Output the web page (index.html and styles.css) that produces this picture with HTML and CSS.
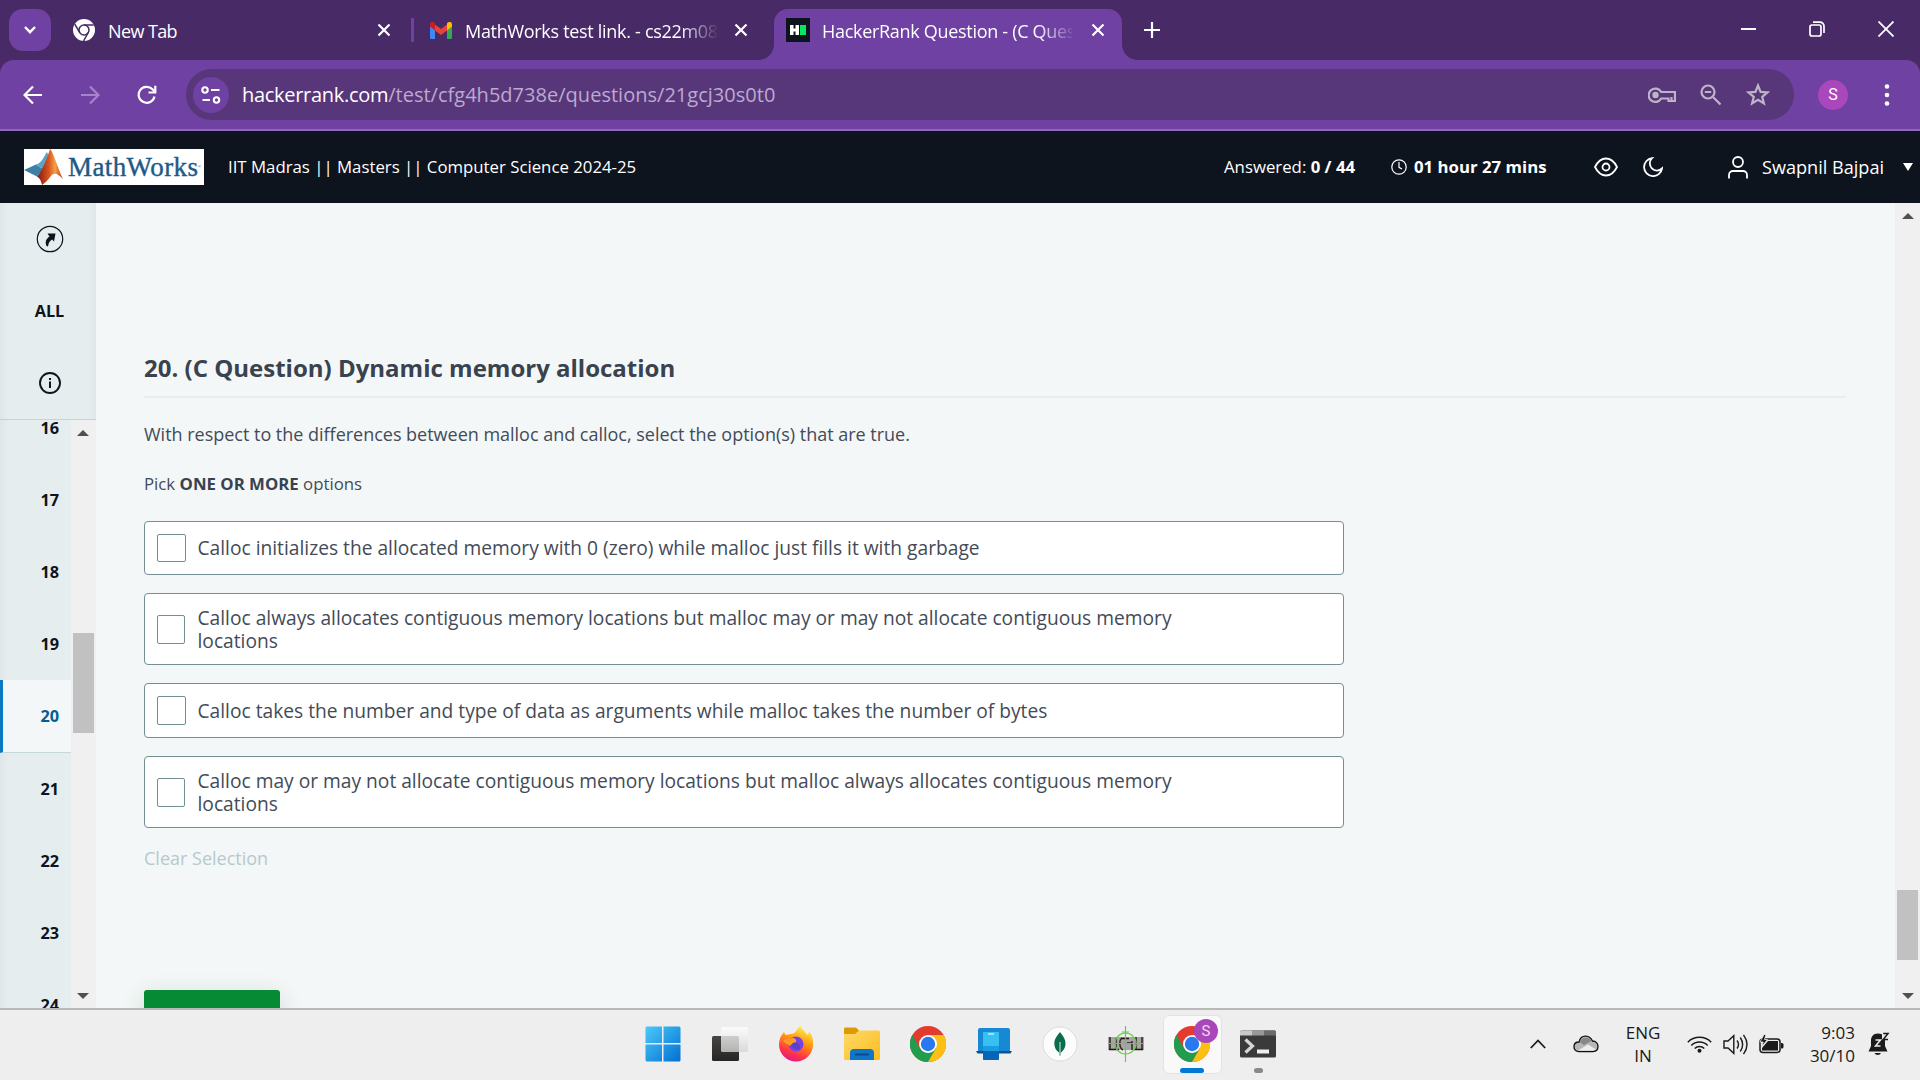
FILE: index.html
```html
<!DOCTYPE html>
<html lang="en">
<head>
<meta charset="utf-8">
<title>HackerRank Question - (C Question) Dynamic memory allocation</title>
<link rel="stylesheet" href="styles.css">
</head>
<body>
<svg class="defs" width="0" height="0" aria-hidden="true">
  <defs>
    <linearGradient id="win" x1="0" y1="0" x2="1" y2="1"><stop offset="0" stop-color="#4cc9fa"/><stop offset="1" stop-color="#0070d1"/></linearGradient>
    <linearGradient id="fox" x1=".7" y1="0" x2=".3" y2="1"><stop offset="0" stop-color="#fff44f"/><stop offset=".4" stop-color="#ff980e"/><stop offset=".75" stop-color="#ff3647"/><stop offset="1" stop-color="#e31587"/></linearGradient>
    <linearGradient id="folder" x1="0" y1="0" x2="1" y2="1"><stop offset="0" stop-color="#ffd96a"/><stop offset="1" stop-color="#fcbc1c"/></linearGradient>
    <linearGradient id="flame" x1="0" y1="0" x2="1" y2="0"><stop offset="0" stop-color="#7a1c12"/><stop offset=".45" stop-color="#d9541e"/><stop offset=".7" stop-color="#f5a04a"/><stop offset="1" stop-color="#b8321a"/></linearGradient>
    <linearGradient id="dark" x1="0" y1="0" x2="0" y2="1"><stop offset="0" stop-color="#484644"/><stop offset="1" stop-color="#262524"/></linearGradient>
    <linearGradient id="pale" x1="0" y1="0" x2="0" y2="1"><stop offset="0" stop-color="#fff"/><stop offset="1" stop-color="#d4d4d4"/></linearGradient>
    <symbol id="close" viewBox="0 0 14 14"><path d="M1.5 1.5 12.5 12.5M12.5 1.5 1.5 12.5" stroke="#fff" stroke-width="2.2" fill="none"/></symbol>
    <symbol id="chrome" viewBox="0 0 36 36">
      <circle cx="18" cy="18" r="18" fill="#e33b2e"/>
      <path d="M2.4 9 10.2 22.5 13 26 18 36A18 18 0 0 1 2.4 9Z" fill="#229c4d"/>
      <path d="M10.2 22.5 25.8 22.500 18 36Z" fill="#229c4d"/>
      <path d="M18 9H33.6A18 18 0 0 1 18 36L25.800 22.500Z" fill="#fcc013"/>
      <circle cx="18" cy="18" r="9" fill="#fff"/><circle cx="18" cy="18" r="7.2" fill="#2a78ee"/>
    </symbol>
  </defs>
</svg>

<header class="tabstrip">
  <div class="tab-search"><svg width="14" height="10" viewBox="0 0 14 10"><path d="M2 2 7 7.2 12 2" stroke="#fff" stroke-width="2.4" fill="none"/></svg></div>
  <div class="tab tab-new">
    <svg width="22" height="22" viewBox="0 0 22 22"><circle cx="11" cy="11" r="11" fill="#fff"/><g fill="none" stroke="#482a67" stroke-width="1.5"><circle cx="11" cy="11" r="5"/><path d="M11 6h9.7M6.7 13.5 1.8 5.2M15.3 13.5 10.5 22"/></g></svg>
    <span class="tab-title t-new">New Tab</span>
    <svg class="x" width="14" height="14"><use href="#close"/></svg>
  </div>
  <div class="tab-sep"></div>
  <div class="tab tab-mail">
    <svg width="22" height="17" viewBox="0 0 22 17"><path d="M0 2V15.5A1.5 1.5 0 0 0 1.5 17H5V7Z" fill="#4285f4"/><path d="M22 2V15.5A1.5 1.5 0 0 1 20.5 17H17V7Z" fill="#34a853"/><path d="M5 2.5 11 7 17 2.5V8.4L11 13 5 8.4Z" fill="#ea4335"/><path d="M0 2.2C0 0 2.6 -.8 4.2 .6L5 1.3V8.4L0 4.5Z" fill="#c5221f"/><path d="M22 2.2C22 0 19.4 -.8 17.8 .6L17 1.3V8.4L22 4.5Z" fill="#fbbc04"/></svg>
    <span class="tab-title t-mail">MathWorks test link. - cs22m088</span>
    <svg class="x" width="14" height="14"><use href="#close"/></svg>
  </div>
  <div class="tab tab-active">
    <svg width="24" height="24" viewBox="0 0 24 24"><path fill="#0d141d" d="M0 0h24v24H0z"/><path fill="#fff" d="M4 7h3.500v3.500h2V7H13v10H9.500v-3.500h-2V17H4z"/><path fill="#05e765" d="M14 7h6v10h-6z"/></svg>
    <span class="tab-title t-active">HackerRank Question - (C Question)</span>
    <svg class="x" width="14" height="14"><use href="#close"/></svg>
  </div>
  <svg class="plus" width="16" height="16" viewBox="0 0 16 16"><path d="M8 0V16M0 8H16" stroke="#fff" stroke-width="2.200"/></svg>
  <div class="win-controls">
    <svg width="15" height="16" viewBox="0 0 15 16"><path d="M0 8H15" stroke="#fff" stroke-width="2"/></svg>
    <svg width="16" height="16" viewBox="0 0 16 16" fill="none" stroke="#fff" stroke-width="1.700"><rect x="1" y="4" width="11" height="11" rx="2"/><path d="M4 1.200H11A4 4 0 0 1 15 5.200V12"/></svg>
    <svg width="16" height="16" viewBox="0 0 16 16"><path d="M.5.5 15.500 15.500M15.500.5.5 15.500" stroke="#fff" stroke-width="1.800"/></svg>
  </div>
</header>

<div class="toolbar-wrap">
<nav class="toolbar">
  <svg width="20" height="20" viewBox="0 0 20 20" fill="none" stroke="#fff" stroke-width="2.200"><path d="M19 10H2M10 1.500 1.500 10 10 18.500"/></svg>
  <svg width="20" height="20" viewBox="0 0 20 20" fill="none" stroke="#a684cb" stroke-width="2.200"><path d="M1 10H18M10 1.500 18.500 10 10 18.500"/></svg>
  <svg width="20" height="20" viewBox="0 0 20 20" fill="none" stroke="#fff" stroke-width="2.200"><path d="M17.500 11.500A8 8 0 1 1 15.500 4.300L18 7"/><path d="M18.300.8V7.500H11.500"/></svg>
  <div class="omnibox">
    <div class="site-info"><svg width="20" height="18" viewBox="0 0 20 18" fill="none" stroke="#fff" stroke-width="2.100"><circle cx="4" cy="4" r="2.700"/><path d="M10 4H18.500M1.500 14H9"/><circle cx="15.500" cy="14" r="2.700"/></svg></div>
    <div class="url"><span class="host">hackerrank.com</span><span class="path">/test/cfg4h5d738e/questions/21gcj30s0t0</span></div>
    <div class="omni-icons">
      <svg width="28" height="18" viewBox="0 0 28 18" fill="none" stroke="#bfb3c7" stroke-width="2.200"><path d="M13.200 6H27V15H20.500V12.500H13.200A6.700 6.700 0 1 1 13.200 6Z"/><circle cx="7.500" cy="9" r="3.200" fill="#bfb3c7" stroke="none"/><path d="M23.500 15V11"/></svg>
      <svg width="22" height="22" viewBox="0 0 22 22" fill="none" stroke="#bfb3c7" stroke-width="2.200"><circle cx="8" cy="8" r="6.500"/><path d="M13 13 20.500 20.500M4.800 8h6.400"/></svg>
      <svg width="24" height="23" viewBox="0 0 24 23" fill="none" stroke="#bfb3c7" stroke-width="2.200"><path d="M12 2.500 14.600 8.900 21.500 9.400 16.200 13.800 17.900 20.500 12 16.900 6.100 20.500 7.800 13.800 2.500 9.400 9.400 8.900Z"/></svg>
    </div>
  </div>
  <div class="avatar">S</div>
  <svg width="6" height="22" viewBox="0 0 6 22" fill="#fff"><circle cx="3" cy="2.500" r="2.300"/><circle cx="3" cy="11" r="2.300"/><circle cx="3" cy="19.500" r="2.300"/></svg>
</nav>
</div>

<header class="exam-header">
  <div class="logo">
    <svg width="40" height="36" viewBox="0 0 40 36"><path d="M0 21 12 15.500 19 20 13 27.500Z" fill="#3c7fa8"/><path d="M12 15.500C18 14 20 7 23 3L25 8 19 20Z" fill="#5fa3c4"/><path d="M13 27.500C18 22 23 10 26 0C29 2 34 20 39 30C34 25 30 23 27 27C24 31 21 34 18 36C17 32 16 29 13 27.500Z" fill="url(#flame)"/></svg>
    <span>MathWorks</span><sup>®</sup>
  </div>
  <div class="test-name">IIT Madras || Masters || Computer Science 2024-25</div>
  <div class="answered">Answered: <b>0 / 44</b></div>
  <div class="timer"><svg width="16" height="16" viewBox="0 0 16 16" fill="none" stroke="#fff" stroke-width="1.200"><circle cx="8" cy="8" r="7.200"/><path d="M8 3V8.300L11 10"/></svg><b>01 hour 27 mins</b></div>
  <div class="theme">
    <svg width="24" height="20" viewBox="0 0 24 20" fill="none" stroke="#fff" stroke-width="1.800"><path d="M1 10C4 4 8 1.500 12 1.500S20 4 23 10C20 16 16 18.500 12 18.500S4 16 1 10Z"/><circle cx="12" cy="10" r="3.500"/></svg>
    <svg width="20" height="20" viewBox="0 0 20 20" fill="none" stroke="#fff" stroke-width="1.800"><path d="M19 11.500A9 9 0 1 1 9 1.200A7 7 0 0 0 19 11.500Z"/></svg>
  </div>
  <div class="user"><svg width="20" height="23" viewBox="0 0 20 23" fill="none" stroke="#fff" stroke-width="1.800"><circle cx="10" cy="6" r="5"/><path d="M1 22.500V19A4 4 0 0 1 5 15H15A4 4 0 0 1 19 19V22.500"/></svg><span>Swapnil Bajpai</span><svg width="10" height="8" viewBox="0 0 10 8"><path d="M0 0H10L5 8Z" fill="#fff"/></svg></div>
</header>

<main class="exam">
  <aside class="sidebar">
    <div class="side-top">
      <div class="cell"><svg width="28" height="28" viewBox="0 0 28 28"><circle cx="14" cy="14" r="12.700" fill="none" stroke="#0e141e" stroke-width="1.200"/><path d="M11.500 8.500H19.500L18 16.500 16.200 14.500C13.500 16 12.500 18 12 21.500L10.500 21C9 17 9.500 14.500 13.500 11.500Z" fill="#0e141e"/></svg></div>
      <div class="cell all">ALL</div>
      <div class="cell"><svg width="22" height="22" viewBox="0 0 22 22"><circle cx="11" cy="11" r="10" fill="none" stroke="#0e141e" stroke-width="1.900"/><path d="M10 9.500h2V16h-2zM10 6h2v2h-2z" fill="#0e141e"/></svg></div>
    </div>
    <div class="side-list">
      <div class="numbers">
        <div class="num">16</div><div class="num">17</div><div class="num">18</div><div class="num">19</div>
        <div class="num current">20</div>
        <div class="num">21</div><div class="num">22</div><div class="num">23</div><div class="num">24</div>
      </div>
      <div class="scrollbar side-scroll"><i class="up"></i><i class="thumb"></i><i class="down"></i></div>
    </div>
  </aside>
  <section class="question">
    <h1>20. (C Question) Dynamic memory allocation</h1>
    <p class="prompt">With respect to the differences between malloc and calloc, select the option(s) that are true.</p>
    <p class="pick">Pick <b>ONE OR MORE</b> options</p>
    <div class="options">
      <label class="option first"><span class="box"></span><span>Calloc initializes the allocated memory with 0 (zero) while malloc just fills it with garbage</span></label>
      <label class="option two"><span class="box"></span><span>Calloc always allocates contiguous memory locations but malloc may or may not allocate contiguous memory<br>locations</span></label>
      <label class="option third"><span class="box"></span><span>Calloc takes the number and type of data as arguments while malloc takes the number of bytes</span></label>
      <label class="option two"><span class="box"></span><span>Calloc may or may not allocate contiguous memory locations but malloc always allocates contiguous memory<br>locations</span></label>
    </div>
    <div class="clear">Clear Selection</div>
    <div class="continue">Continue</div>
  </section>
  <div class="scrollbar page-scroll"><i class="up"></i><i class="thumb"></i><i class="down"></i></div>
</main>

<footer class="taskbar">
  <div class="apps">
    <div class="app start"><svg width="36" height="36" viewBox="0 0 36 36" fill="url(#win)"><path d="M2 .5H17V17H.5V2A1.500 1.500 0 0 1 2 .5ZM18.500.5H34A1.500 1.500 0 0 1 35.500 2V17H18.500ZM.5 18.500H17V35.500H2A1.500 1.500 0 0 1 .5 34ZM18.500 18.500H35.500V34A1.500 1.500 0 0 1 34 35.500H18.500Z"/></svg></div>
    <div class="app"><svg width="36" height="36" viewBox="0 0 36 36"><rect y="10" width="27" height="25" rx="1.500" fill="url(#dark)"/><rect x="9" y="1" width="27" height="25" rx="1.500" fill="url(#pale)" opacity=".8"/></svg></div>
    <div class="app"><svg width="36" height="36" viewBox="0 0 36 36"><path d="M18 35.500A17 17 0 0 1 1 18.500C1 13 3 9.500 6 6L7.500 9 13 8C15 8 17 7 18 5C20 3 20 1 23 0C24 4 28 6 29.500 9C31 8 31 6 31 5C34 9 35.500 13 35 19A17 17 0 0 1 18 35.500Z" fill="url(#fox)"/><circle cx="18" cy="18" r="7.500" fill="#7542e5"/><path d="M5 14C9 12 12 14 14 12C17 12 19 14 18 16C15 17 14 18 12 20C10 18 7 18 5 14Z" fill="#ff9a22"/><path d="M15 17C20 16 22 18 22 23C18 24 14 22 13 19Z" fill="#5b3fc4"/></svg></div>
    <div class="app"><svg width="36" height="34" viewBox="0 0 36 34"><path d="M0 2A1.500 1.500 0 0 1 1.500.5H12L15.500 4 12 8H0Z" fill="#dd9a05"/><path d="M0 7H11L15 3.500H34.500A1.500 1.500 0 0 1 36 5V31.500A1.500 1.500 0 0 1 34.500 33H1.500A1.500 1.500 0 0 1 0 31.500Z" fill="url(#folder)"/><path d="M6 33V26A4 4 0 0 1 10 22H26A4 4 0 0 1 30 26V33Z" fill="#0f75c4"/><path d="M12 27.500H24" stroke="#084c87" stroke-width="2" stroke-linecap="round"/></svg></div>
    <div class="app"><svg width="36" height="36"><use href="#chrome"/></svg></div>
    <div class="app"><svg width="36" height="34" viewBox="0 0 36 34"><path d="M2 3A2 2 0 0 1 4 1H32A2 2 0 0 1 34 3V25H2Z" fill="#1688d4"/><path d="M0 24H36L34.500 26.500H1.500Z" fill="#07529b"/><rect x="7" y="5" width="16" height="28" rx="1" fill="#37c0f2"/><path d="M7 19H23V24H7Z" fill="#1a9de0"/><path d="M7 24H23V32A1 1 0 0 1 22 33H8A1 1 0 0 1 7 32Z" fill="#0765b8"/><path d="M12 7H18" stroke="#bfeefe" stroke-width="1.500"/></svg></div>
    <div class="app"><svg width="36" height="36" viewBox="0 0 36 36"><circle cx="18" cy="18" r="17" fill="#fcfcfc" stroke="#dcdcdc"/><path d="M18 6C21 10 23.500 13 23.500 17.500C23.500 22 21 25 18.500 27V29.500H17.500V27C14.500 25 12.300 22 12.300 17.500C12.300 13 15 10 18 6Z" fill="#0b6b4d"/><path d="M18 16V29" stroke="#9fc9b8" stroke-width="1.400"/></svg></div>
    <div class="app"><svg width="38" height="36" viewBox="0 0 38 36"><path d="M1 11H37V24H1Z" fill="#a5a5a5"/><path d="M3 11V24M9 12V24M15 12C12 14 12 22 16 24M25 15V24M29 11V24M35 11V24" stroke="#352420" stroke-width="1.500" fill="none"/><path d="M14 12.500H22M20 17H25M2 23.500H12M27 23.500H36" stroke="#221712" stroke-width="1.500"/><g fill="none" stroke="#62cf43" stroke-width="1.200"><circle cx="18.500" cy="17.500" r="10.500"/><path d="M18.500 0V36M1 17.500H37M15 6H22"/></g></svg></div>
    <div class="app active"><svg width="36" height="36"><use href="#chrome"/></svg><span class="badge">S</span><i class="run"></i></div>
    <div class="app"><svg width="36" height="28" viewBox="0 0 36 28"><rect y=".5" width="36" height="27" rx="1.500" fill="#3a3a3a"/><path d="M0 5.500V2A1.500 1.500 0 0 1 1.500.5H12V5.500Z" fill="#c9c9c9"/><path d="M12 .5H24V5.500H12Z" fill="#999"/><path d="M24 .5H34.500A1.500 1.500 0 0 1 36 2V5.500H24Z" fill="#6b6b6b"/><path d="M5.500 9.500 12.500 16 5.500 22.500" stroke="#d6d6d6" stroke-width="3.200" fill="none"/><path d="M17 21.500H29" stroke="#eee" stroke-width="4"/></svg><i class="run idle"></i></div>
  </div>
  <div class="tray">
    <svg class="chev" width="16" height="10" viewBox="0 0 16 10"><path d="M.8 9 8 1.500 15.200 9" fill="none" stroke="#1b1b1b" stroke-width="1.800"/></svg>
    <svg class="cloud" width="26" height="18" viewBox="0 0 26 18"><path d="M6 16.500C2.500 16.500 1 14.500 1 11.700S3 7 6 7C7 3 10 1 13 1.200C16 1.400 18 3 19.500 6C23 6 25 8.500 25 11.500S23 16.500 20 16.500Z" fill="#b7b7b7" stroke="#111" stroke-width="1.300"/><path d="M6.500 7C8.500 2.500 15 .5 18.500 6L11 10Z" fill="#888"/><path d="M5 15.500 15 9.500 23 14.500 20 15.700H6Z" fill="#eee"/></svg>
    <div class="lang">ENG<br>IN</div>
    <svg class="wifi" width="25" height="18" viewBox="0 0 25 18" fill="none" stroke="#1b1b1b" stroke-width="1.500"><path d="M.8 7.200A16.500 16.500 0 0 1 24.200 7.200M4.300 10.500A11.500 11.500 0 0 1 20.700 10.500M7.700 13.500A6.800 6.800 0 0 1 17.300 13.500"/><circle cx="12.500" cy="15.800" r="2" fill="#1b1b1b" stroke="none"/></svg>
    <svg class="vol" width="25" height="21" viewBox="0 0 25 21" fill="none" stroke="#1b1b1b" stroke-width="1.400"><path d="M1 7V14H5L10.800 19.300V1.700L5 7Z"/><path d="M14 6.500Q17 10.500 14 14.500M17.300 3.500Q22 10.500 17.300 17.500M20.500.8Q27.500 10.500 20.500 20.200"/></svg>
    <svg class="bat" width="25" height="20" viewBox="0 0 25 20"><rect x="1" y="5" width="20" height="13.500" rx="3" fill="none" stroke="#1b1b1b" stroke-width="1.500"/><path d="M9 7H19V16.500H3V14Z" fill="#1b1b1b"/><path d="M22 9H23A1.500 1.500 0 0 1 24.500 10.500V13A1.500 1.500 0 0 1 23 14.500H22Z" fill="#1b1b1b"/><path d="M5 .5 1 8H4.200L2.500 13 8.500 5.500H5.500L7 .5Z" fill="#1b1b1b" stroke="#eee" stroke-width=".8"/></svg>
    <div class="clock">9:03<br>30/10</div>
    <svg class="bell" width="22" height="24" viewBox="0 0 22 24"><path d="M10 1.500C5 1.500 3 5 3 8.500V14L.5 19.500H19.500L17 14V8.500C17 4.500 15 1.500 10 1.500ZM6.500 21H13A3.500 3 0 0 1 6.500 21Z" fill="#1b1b1b"/><path d="M7.500 8H12.500L7.500 14H12.500" fill="none" stroke="#eee" stroke-width="1.500"/><path d="M14 0H21V7.500H14Z" fill="#eee"/><path d="M15.200 1.500H20L15.200 7.500H20" fill="none" stroke="#1b1b1b" stroke-width="1.500"/></svg>
  </div>
</footer>
</body>
</html>
```
FILE: styles.css
```css
* { box-sizing: border-box; }
body {
  margin: 0;
  width: 1920px;
  height: 1080px;
  overflow: hidden;
  display: flex;
  flex-direction: column;
  background: #f3f7f7;
  color: #39424e;
  font-family: "Open Sans", "Noto Sans", sans-serif;
}
svg { display: block; flex: none; }
.defs { position: absolute; }

/* Tab strip */
.tabstrip {
  height: 60px;
  flex: none;
  display: flex;
  align-items: center;
  background: #482a67;
  color: #fff;
  padding-left: 9px;
}
.tab-search {
  width: 42px;
  height: 42px;
  border-radius: 14px;
  background: #6e41a2;
  display: flex;
  align-items: center;
  justify-content: center;
}
.tab { display: flex; align-items: center; }
.tab-new { width: 318px; margin-left: 22px; }
.tab-sep { width: 3px; height: 24px; margin-left: 20px; background: #6e41a2; border-radius: 1px; }
.tab-mail { width: 318px; margin-left: 16px; }
.tab-active {
  position: relative;
  width: 348px;
  height: 51px;
  align-self: flex-end;
  margin-left: 26px;
  padding: 0 17px 9px 12px;
  border-radius: 14px 14px 0 0;
  background: #6e41a2;
}
.tab-active::before, .tab-active::after {
  content: "";
  position: absolute;
  bottom: 0;
  width: 15px;
  height: 15px;
}
.tab-active::before { left: -15px; background: radial-gradient(circle at 0 0, transparent 14.5px, #6e41a2 15px); }
.tab-active::after { right: -15px; background: radial-gradient(circle at 100% 0, transparent 14.5px, #6e41a2 15px); }
.tab-title {
  flex: none;
  font-size: 18px;
  line-height: 24px;
  padding-top: 2px;
  white-space: nowrap;
  overflow: hidden;
}
.t-new { margin-left: 13px; letter-spacing: -0.6px; }
.t-mail { margin-left: 13px; width: 252px; letter-spacing: -0.3px; -webkit-mask-image: linear-gradient(90deg, #000 215px, transparent 254px); }
.t-active { margin-left: 12px; width: 250px; letter-spacing: -0.3px; -webkit-mask-image: linear-gradient(90deg, #000 215px, transparent 254px); }
.x { margin-left: auto; }
.plus { margin-left: 22px; }
.win-controls { margin: -2px 26px 0 auto; display: flex; gap: 53px; }

/* Browser toolbar */
.toolbar-wrap { background: #482a67; flex: none; }
.toolbar {
  height: 71px;
  display: flex;
  align-items: center;
  padding-left: 23px;
  border-bottom: 2px solid #906ab8;
  border-radius: 14px 14px 0 0;
  background: #6e41a2;
}
.toolbar > svg + svg { margin-left: 37px; }
.omnibox {
  width: 1608px;
  height: 51px;
  margin-left: 29px;
  padding: 0 24px 0 7px;
  border-radius: 26px;
  background: #573779;
  display: flex;
  align-items: center;
}
.site-info {
  width: 36px;
  height: 36px;
  border-radius: 50%;
  background: #6e41a2;
  display: flex;
  align-items: center;
  justify-content: center;
}
.url { margin-left: 13px; font-size: 20px; line-height: 28px; white-space: nowrap; }
.host { color: #fff; letter-spacing: -0.3px; }
.path { color: #bda9d0; letter-spacing: 0.02px; }
.omni-icons { margin-left: auto; display: flex; align-items: center; gap: 24px; }
.avatar {
  width: 30px;
  height: 30px;
  margin-left: 24px;
  border-radius: 50%;
  background: #ab47bc;
  color: #fff;
  font: 16px/30px Roboto, sans-serif;
  text-align: center;
}
.toolbar > .avatar + svg { margin-left: 36px; }

/* Exam header */
.exam-header {
  height: 72px;
  flex: none;
  display: flex;
  align-items: center;
  padding-left: 24px;
  background: #0e141e;
  color: #fff;
  font-size: 16.8px;
  line-height: 22px;
  white-space: nowrap;
}
.logo {
  width: 180px;
  height: 36px;
  background: #fff;
  color: #1d5a87;
  display: flex;
  align-items: center;
  overflow: hidden;
  font: 27px/36px "Liberation Serif", serif;
}
.logo span { margin-left: 4px; letter-spacing: 0.4px; -webkit-text-stroke: 0.4px #1d5a87; }
.logo sup { margin-left: -1px; font-size: 5px; }
.test-name { width: 996px; margin-left: 24px; }
.answered { width: 167px; }
.timer { width: 203px; display: flex; align-items: center; gap: 7px; }
.theme { width: 134px; display: flex; align-items: center; gap: 25px; }
.user { display: flex; align-items: center; font-size: 18.1px; }
.user span { width: 141px; margin-left: 14px; }

/* Exam body */
.exam { height: 805px; flex: none; display: flex; overflow: hidden; }
.sidebar {
  width: 96px;
  flex: none;
  display: flex;
  flex-direction: column;
  background: linear-gradient(90deg, #dfe5e8, #e6edef 8px);
  color: #0e141e;
  font-size: 16.3px;
  font-weight: 700;
}
.side-top {
  height: 217px;
  flex: none;
  border-bottom: 1px solid #c7d2d5;
  background: linear-gradient(270deg, #dfe5e8, rgba(230, 237, 239, 0) 8px);
}
.cell { height: 72px; padding-left: 3px; display: flex; align-items: center; justify-content: center; }
.side-list { flex: 1; min-height: 0; display: flex; overflow: hidden; }
.numbers { width: 71px; margin-top: -28px; }
.num { height: 72px; line-height: 72px; padding-left: 40.5px; }
.current {
  height: 73px;
  padding-left: 37.5px;
  border-left: 3px solid #0a7ac2;
  border-bottom: 1px solid #c7d8dc;
  background: #f3f7f7;
  color: #055c94;
}
.scrollbar { width: 25px; flex: none; background: #f0f0f0; display: flex; flex-direction: column; align-items: center; }
.scrollbar i { display: block; flex: none; }
.up { border: 6px solid transparent; border-top: 0; border-bottom: 6px solid #505050; }
.down { border: 6px solid transparent; border-bottom: 0; border-top: 6px solid #505050; margin-top: auto; }
.thumb { width: 21px; background: #c1c1c1; }
.side-scroll { padding-right: 1px; }
.side-scroll .up { margin-top: 10px; }
.side-scroll .thumb { height: 100px; margin-top: 197px; }
.side-scroll .down { margin-bottom: 9px; }
.page-scroll .up { margin-top: 10px; }
.page-scroll .thumb { height: 70px; margin-top: 671px; }
.page-scroll .down { margin-bottom: 9px; }

.question { width: 1799px; flex: none; padding: 0 49px 0 48px; }
h1 {
  height: 195px;
  margin: 0;
  padding-top: 148px;
  border-bottom: 2px solid #e7eeef;
  font-size: 24px;
  line-height: 34px;
  font-weight: 700;
}
.prompt { margin: 23px 0 0; font-size: 18px; line-height: 26px; letter-spacing: -0.015px; color: #434b57; }
.pick { margin: 25px 0 0; font-size: 16.8px; line-height: 24px; color: #434b57; }
.pick b { color: #39424e; }
.options { width: 1200px; margin-top: 25px; display: grid; gap: 18px; }
.option {
  height: 54px;
  padding: 0 12px;
  border: 1px solid #738f93;
  border-radius: 4px;
  background: #fff;
  display: flex;
  align-items: center;
  gap: 11.5px;
  color: #434b57;
  font-size: 19.2px;
  line-height: 23px;
  white-space: nowrap;
}
.first { padding-bottom: 1px; }
.two { height: 72px; }
.third { height: 55px; }
.box { width: 29px; height: 29px; flex: none; border: 1px solid #738f93; border-radius: 2px; }
.first .box { height: 28px; }
.two .box { width: 28px; margin-right: 1px; }
.clear { margin-top: 17px; font-size: 18px; line-height: 26px; color: #b7c9cc; }
.continue {
  width: 136px;
  height: 48px;
  margin-top: 119px;
  padding-top: 9px;
  border-radius: 3px;
  background: #078a34;
  box-shadow: 0 6px 24px rgba(7, 80, 40, 0.16);
  color: #fff;
  font-size: 18px;
  line-height: 30px;
  text-align: center;
}

/* Taskbar */
.taskbar {
  height: 72px;
  flex: none;
  display: flex;
  border-top: 2px solid #b9b9b9;
  background: #eee;
  color: #1b1b1b;
}
.apps { display: flex; margin-left: 631px; height: 68px; width: 893px; }
.app { position: relative; width: 66px; flex: none; display: flex; align-items: center; justify-content: center; }
.start { padding-right: 2px; }
.active::before {
  content: "";
  position: absolute;
  left: 4px;
  top: 5px;
  width: 57px;
  height: 57px;
  border-radius: 6px;
  border: 1px solid #e3e3e3;
  background: #f9f9f9;
}
.active svg { position: relative; }
.badge {
  position: absolute;
  left: 35px;
  top: 9px;
  width: 24px;
  height: 24px;
  border-radius: 50%;
  background: #a946ba;
  color: #f0d8f4;
  font: 15px/24px Roboto, sans-serif;
  text-align: center;
}
.run { position: absolute; left: 21px; top: 58px; width: 24px; height: 5px; border-radius: 3px; background: #0078d4; }
.idle { left: 29px; width: 9px; background: #888; }
.tray { display: flex; align-items: center; height: 68px; font-size: 17px; line-height: 23px; }
.chev { margin-left: 6px; }
.cloud { margin-left: 27px; }
.lang { width: 40px; margin-left: 24px; text-align: center; }
.wifi { margin-left: 24px; }
.vol { margin-left: 11px; }
.bat { margin-left: 11px; }
.clock { width: 60px; margin-left: 11px; text-align: right; }
.bell { margin-left: 13px; }
```
